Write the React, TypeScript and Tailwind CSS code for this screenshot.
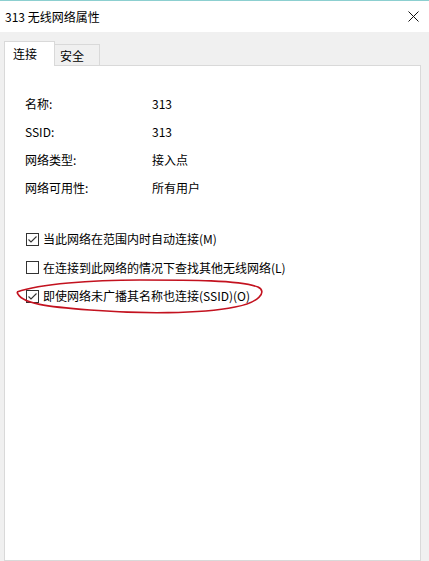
import React from 'react'

const font = { fontFamily: '"Noto Sans CJK SC", "Noto Sans", sans-serif' }

const props = [
  { label: '名称:', value: '313' },
  { label: 'SSID:', value: '313' },
  { label: '网络类型:', value: '接入点' },
  { label: '网络可用性:', value: '所有用户' },
]

const options = [
  { text: '当此网络在范围内时自动连接(M)', checked: true },
  { text: '在连接到此网络的情况下查找其他无线网络(L)', checked: false },
  { text: '即使网络未广播其名称也连接(SSID)(O)', checked: true },
]

function CheckBox({ checked }: { checked: boolean }) {
  return (
    <span className="w-[13px] h-[13px] border border-[#333] bg-white flex items-center justify-center shrink-0">
      {checked && (
        <svg width="11" height="11" viewBox="0 0 11 11">
          <path d="M1.5 5.5 L4 8 L9.5 2.5" fill="none" stroke="#333" strokeWidth="1.1" />
        </svg>
      )}
    </span>
  )
}

export default function App() {
  return (
    <div
      className="relative w-[429px] h-[561px] bg-[#f0f0f0] flex flex-col overflow-hidden text-[12px] text-black"
      style={font}
    >
      {/* 标题栏 */}
      <div className="h-[32px] bg-white border-t border-[#8ccfd0] flex items-center justify-between pl-[5px] pr-[10px]">
        <span className="leading-none">313 无线网络属性</span>
        <svg width="11" height="11" viewBox="0 0 11 11">
          <path d="M0.5 0.5 L10.5 10.5 M10.5 0.5 L0.5 10.5" stroke="#111" strokeWidth="1" />
        </svg>
      </div>

      {/* 选项卡 */}
      <div className="flex items-end pl-[4px] pt-[9px]">
        <div className="relative z-10 h-[25px] w-[51px] -mb-px bg-white border border-b-0 border-[#d9d9d9] pl-[8px] pt-[3px]">
          连接
        </div>
        <div className="h-[21px] w-[45px] bg-[#f0f0f0] border border-l-0 border-b-0 border-[#d9d9d9] pl-[5px] pt-[2px]">
          安全
        </div>
      </div>

      {/* 内容面板 */}
      <div className="flex-1 ml-[4px] mr-[8px] bg-white border border-[#d9d9d9] pt-[24px] pl-[20px]">
        <div className="flex flex-col">
          {props.map((p) => (
            <div key={p.label} className="h-[28px] flex items-center">
              <span className="w-[127px]">{p.label}</span>
              <span>{p.value}</span>
            </div>
          ))}
        </div>
        <div className="flex flex-col mt-[23px] pl-[1px]">
          {options.map((o) => (
            <div key={o.text} className="h-[28.5px] flex items-center gap-[4px]">
              <CheckBox checked={o.checked} />
              <span>{o.text}</span>
            </div>
          ))}
        </div>
      </div>

      {/* 红色圈注 */}
      <svg className="absolute inset-0 pointer-events-none" width="429" height="561">
        <path
          d="M17 292 C40 284, 90 280, 140 280 C190 280, 240 280, 258 287 C268 292, 258 303, 235 307 C200 314, 140 314, 90 310 C50 307, 20 304, 17 292"
          fill="none"
          stroke="#c3121f"
          strokeWidth="1.6"
        />
      </svg>
    </div>
  )
}
